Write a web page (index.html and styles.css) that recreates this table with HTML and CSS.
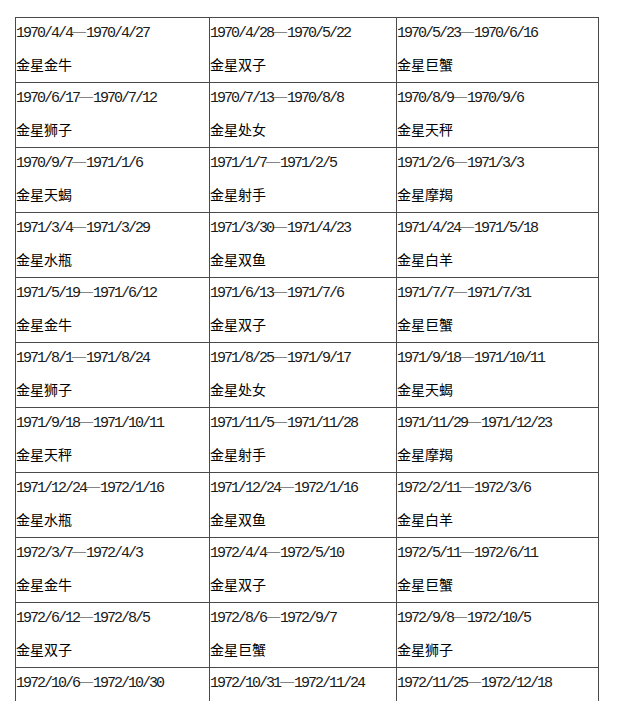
FILE: index.html
```html
<!DOCTYPE html>
<html lang="zh-CN">
<head>
<meta charset="utf-8">
<title>金星星座表</title>
<link rel="stylesheet" href="styles.css">
</head>
<body>
<table class="venus">
  <colgroup><col class="c1"><col class="c2"><col class="c3"></colgroup>
  <tr>
    <td><div class="date">1970/4/4<span class="dash">—</span>1970/4/27</div><div class="sign">金星金牛</div></td>
    <td><div class="date">1970/4/28<span class="dash">—</span>1970/5/22</div><div class="sign">金星双子</div></td>
    <td><div class="date">1970/5/23<span class="dash">—</span>1970/6/16</div><div class="sign">金星巨蟹</div></td>
  </tr>
  <tr>
    <td><div class="date">1970/6/17<span class="dash">—</span>1970/7/12</div><div class="sign">金星狮子</div></td>
    <td><div class="date">1970/7/13<span class="dash">—</span>1970/8/8</div><div class="sign">金星处女</div></td>
    <td><div class="date">1970/8/9<span class="dash">—</span>1970/9/6</div><div class="sign">金星天秤</div></td>
  </tr>
  <tr>
    <td><div class="date">1970/9/7<span class="dash">—</span>1971/1/6</div><div class="sign">金星天蝎</div></td>
    <td><div class="date">1971/1/7<span class="dash">—</span>1971/2/5</div><div class="sign">金星射手</div></td>
    <td><div class="date">1971/2/6<span class="dash">—</span>1971/3/3</div><div class="sign">金星摩羯</div></td>
  </tr>
  <tr>
    <td><div class="date">1971/3/4<span class="dash">—</span>1971/3/29</div><div class="sign">金星水瓶</div></td>
    <td><div class="date">1971/3/30<span class="dash">—</span>1971/4/23</div><div class="sign">金星双鱼</div></td>
    <td><div class="date">1971/4/24<span class="dash">—</span>1971/5/18</div><div class="sign">金星白羊</div></td>
  </tr>
  <tr>
    <td><div class="date">1971/5/19<span class="dash">—</span>1971/6/12</div><div class="sign">金星金牛</div></td>
    <td><div class="date">1971/6/13<span class="dash">—</span>1971/7/6</div><div class="sign">金星双子</div></td>
    <td><div class="date">1971/7/7<span class="dash">—</span>1971/7/31</div><div class="sign">金星巨蟹</div></td>
  </tr>
  <tr>
    <td><div class="date">1971/8/1<span class="dash">—</span>1971/8/24</div><div class="sign">金星狮子</div></td>
    <td><div class="date">1971/8/25<span class="dash">—</span>1971/9/17</div><div class="sign">金星处女</div></td>
    <td><div class="date">1971/9/18<span class="dash">—</span>1971/10/11</div><div class="sign">金星天蝎</div></td>
  </tr>
  <tr>
    <td><div class="date">1971/9/18<span class="dash">—</span>1971/10/11</div><div class="sign">金星天秤</div></td>
    <td><div class="date">1971/11/5<span class="dash">—</span>1971/11/28</div><div class="sign">金星射手</div></td>
    <td><div class="date">1971/11/29<span class="dash">—</span>1971/12/23</div><div class="sign">金星摩羯</div></td>
  </tr>
  <tr>
    <td><div class="date">1971/12/24<span class="dash">—</span>1972/1/16</div><div class="sign">金星水瓶</div></td>
    <td><div class="date">1971/12/24<span class="dash">—</span>1972/1/16</div><div class="sign">金星双鱼</div></td>
    <td><div class="date">1972/2/11<span class="dash">—</span>1972/3/6</div><div class="sign">金星白羊</div></td>
  </tr>
  <tr>
    <td><div class="date">1972/3/7<span class="dash">—</span>1972/4/3</div><div class="sign">金星金牛</div></td>
    <td><div class="date">1972/4/4<span class="dash">—</span>1972/5/10</div><div class="sign">金星双子</div></td>
    <td><div class="date">1972/5/11<span class="dash">—</span>1972/6/11</div><div class="sign">金星巨蟹</div></td>
  </tr>
  <tr>
    <td><div class="date">1972/6/12<span class="dash">—</span>1972/8/5</div><div class="sign">金星双子</div></td>
    <td><div class="date">1972/8/6<span class="dash">—</span>1972/9/7</div><div class="sign">金星巨蟹</div></td>
    <td><div class="date">1972/9/8<span class="dash">—</span>1972/10/5</div><div class="sign">金星狮子</div></td>
  </tr>
  <tr>
    <td><div class="date">1972/10/6<span class="dash">—</span>1972/10/30</div></td>
    <td><div class="date">1972/10/31<span class="dash">—</span>1972/11/24</div></td>
    <td><div class="date">1972/11/25<span class="dash">—</span>1972/12/18</div></td>
  </tr>
</table>
</body>
</html>
```
FILE: styles.css
```css
html, body {
  margin: 0;
  padding: 0;
  background: #ffffff;
}

body {
  padding: 17px 0 0 15px;
  color: #000000;
  font-family: "Noto Sans CJK SC", "Noto Sans", sans-serif;
}

.venus {
  border-collapse: collapse;
  table-layout: fixed;
  width: 583px;
}

.c1 { width: 194px; }
.c2 { width: 187px; }
.c3 { width: 202px; }

.venus td {
  border: 1px solid #4a4a4a;
  padding: 0;
  vertical-align: top;
  height: 64px;
}

.date {
  height: 30px;
  line-height: 31px;
  font-family: "Liberation Mono", monospace;
  font-size: 15px;
  letter-spacing: -2px;
  white-space: nowrap;
  color: #1a1a1a;
}

.dash {
  font-family: "Liberation Serif", serif;
  font-size: 14px;
  letter-spacing: 0;
  display: inline-block;
  width: 14px;
  vertical-align: 1px;
  line-height: 14px;
}

.sign {
  height: 32px;
  line-height: 32px;
  font-size: 14px;
  white-space: nowrap;
}
```
